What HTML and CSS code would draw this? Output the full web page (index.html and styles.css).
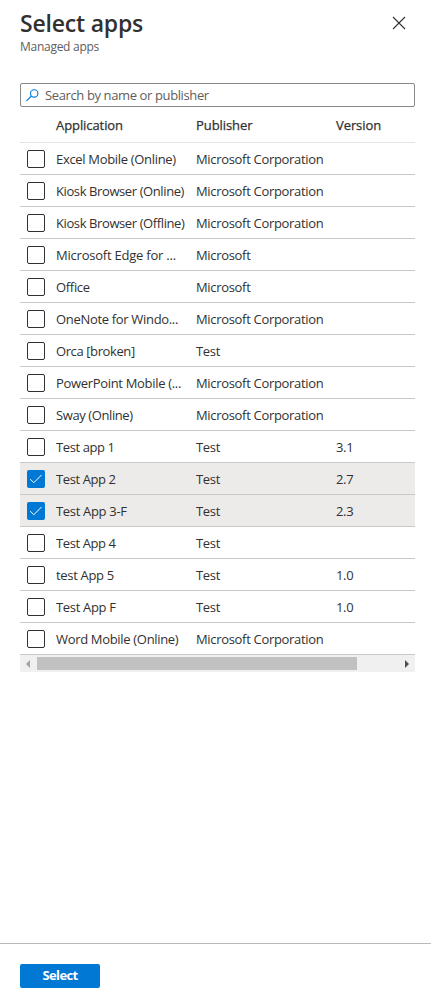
FILE: index.html
```html
<!DOCTYPE html>
<html lang="en">
<head>
<meta charset="utf-8">
<title>Select apps</title>
<link rel="stylesheet" href="styles.css">
</head>
<body>
<div class="panel">
  <header class="header">
    <div>
      <h1 class="title">Select apps</h1>
      <p class="subtitle">Managed apps</p>
    </div>
    <svg class="close" viewBox="0 0 12 12"><path d="M0 0L12 12M12 0L0 12"/></svg>
  </header>
  <main class="content">
    <div class="search">
      <svg class="search-icon" viewBox="0 0 13 13"><circle cx="8.2" cy="4.4" r="3.7"/><path d="M5.5 7L.5 11.8"/></svg>
      <span>Search by name or publisher</span>
    </div>
    <div class="grid">
      <div class="row head"><span></span><span>Application</span><span>Publisher</span><span>Version</span></div>
      <div class="row"><i class="check"></i><span>Excel Mobile (Online)</span><span>Microsoft Corporation</span><span></span></div>
      <div class="row"><i class="check"></i><span class="tight">Kiosk Browser (Online)</span><span>Microsoft Corporation</span><span></span></div>
      <div class="row"><i class="check"></i><span class="tight">Kiosk Browser (Offline)</span><span>Microsoft Corporation</span><span></span></div>
      <div class="row"><i class="check"></i><span class="loose">Microsoft Edge for ...</span><span>Microsoft</span><span></span></div>
      <div class="row"><i class="check"></i><span>Office</span><span>Microsoft</span><span></span></div>
      <div class="row"><i class="check"></i><span>OneNote for Windo...</span><span>Microsoft Corporation</span><span></span></div>
      <div class="row"><i class="check"></i><span class="tight">Orca [broken]</span><span>Test</span><span></span></div>
      <div class="row"><i class="check"></i><span>PowerPoint Mobile (...</span><span>Microsoft Corporation</span><span></span></div>
      <div class="row"><i class="check"></i><span class="tight">Sway (Online)</span><span>Microsoft Corporation</span><span></span></div>
      <div class="row"><i class="check"></i><span class="tight">Test app 1</span><span>Test</span><span>3.1</span></div>
      <div class="row selected"><i class="check"><svg viewBox="0 0 18 18"><path d="M3.3 9.2L6.8 12.7L14.6 4.9"/></svg></i><span class="tight">Test App 2</span><span>Test</span><span>2.7</span></div>
      <div class="row selected"><i class="check"><svg viewBox="0 0 18 18"><path d="M3.3 9.2L6.8 12.7L14.6 4.9"/></svg></i><span>Test App 3-F</span><span>Test</span><span>2.3</span></div>
      <div class="row"><i class="check"></i><span class="tight">Test App 4</span><span>Test</span><span></span></div>
      <div class="row"><i class="check"></i><span>test App 5</span><span>Test</span><span>1.0</span></div>
      <div class="row"><i class="check"></i><span>Test App F</span><span>Test</span><span>1.0</span></div>
      <div class="row"><i class="check"></i><span>Word Mobile (Online)</span><span>Microsoft Corporation</span><span></span></div>
    </div>
    <div class="scrollbar">
      <svg class="arrow left" viewBox="0 0 4 8"><path d="M4 0V8L0 4Z"/></svg>
      <div class="thumb"></div>
      <svg class="arrow right" viewBox="0 0 4 8"><path d="M0 0V8L4 4Z"/></svg>
    </div>
  </main>
  <footer class="footer"><button class="select">Select</button></footer>
</div>
</body>
</html>
```
FILE: styles.css
```css
* { box-sizing: border-box; }
body {
  margin: 0;
  background: #fff;
  color: #323130;
  font-family: "Open Sans", "Noto Sans", sans-serif;
  font-size: 13px;
  line-height: 18px;
}
.panel { display: flex; flex-direction: column; height: 1000px; }
.header {
  display: flex;
  justify-content: space-between;
  align-items: flex-start;
  height: 83px;
  padding: 9px 26px 0 20px;
}
.title { margin: 0; font-size: 23px; line-height: 28px; font-weight: 600; letter-spacing: -.2px; }
.subtitle { margin: 2px 0 0; font-size: 12px; line-height: 16px; color: #605e5c; letter-spacing: -.27px; }
.close { width: 12px; height: 12px; margin-top: 8px; fill: none; stroke: #323130; stroke-width: 1.1; overflow: visible; }
.content { flex: 1; padding: 0 16px 0 20px; }
.search {
  display: flex;
  align-items: center;
  gap: 6px;
  height: 24px;
  padding-left: 5px;
  border: 1px solid #8a8886;
  border-radius: 2px;
  color: #605e5c;
  letter-spacing: -.38px;
}
.search-icon { width: 13px; height: 13px; fill: none; stroke: #0078d4; stroke-width: 1.1; }
.row {
  display: grid;
  grid-template-columns: 29px 140px 140px 1fr;
  align-items: center;
  height: 32px;
  padding-left: 7px;
  border-bottom: 1px solid #c8c8c8;
  white-space: nowrap;
  letter-spacing: -.32px;
}
.row.head { height: 36px; border-color: #e5e4e3; letter-spacing: -.08px; -webkit-text-stroke: .25px #323130; }
.row.selected { background: #edebe9; }
.tight { letter-spacing: -.4px; }
.loose { letter-spacing: -.22px; }
.check { width: 18px; height: 18px; border: 1px solid #323130; border-radius: 2px; }
.selected .check { border: 0; background: #0078d4; }
.check svg { display: block; fill: none; stroke: #fff; stroke-width: 1; }
.scrollbar { display: flex; align-items: center; height: 17px; background: #f0f0f0; }
.thumb { width: 320px; height: 13px; background: #c1c1c1; }
.arrow { width: 4px; height: 8px; }
.left { margin: 0 7px 0 6px; fill: #a3a3a3; }
.right { margin-left: 48px; fill: #505050; }
.footer { height: 57px; padding: 20px 20px 0; border-top: 1px solid #b9b9b9; }
.select {
  display: block;
  width: 80px;
  height: 24px;
  padding: 0 0 2px;
  border: 0;
  border-radius: 2px;
  background: #0078d4;
  color: #fff;
  font: 700 13px/22px "Open Sans", sans-serif;
  letter-spacing: -.6px;
}
```
